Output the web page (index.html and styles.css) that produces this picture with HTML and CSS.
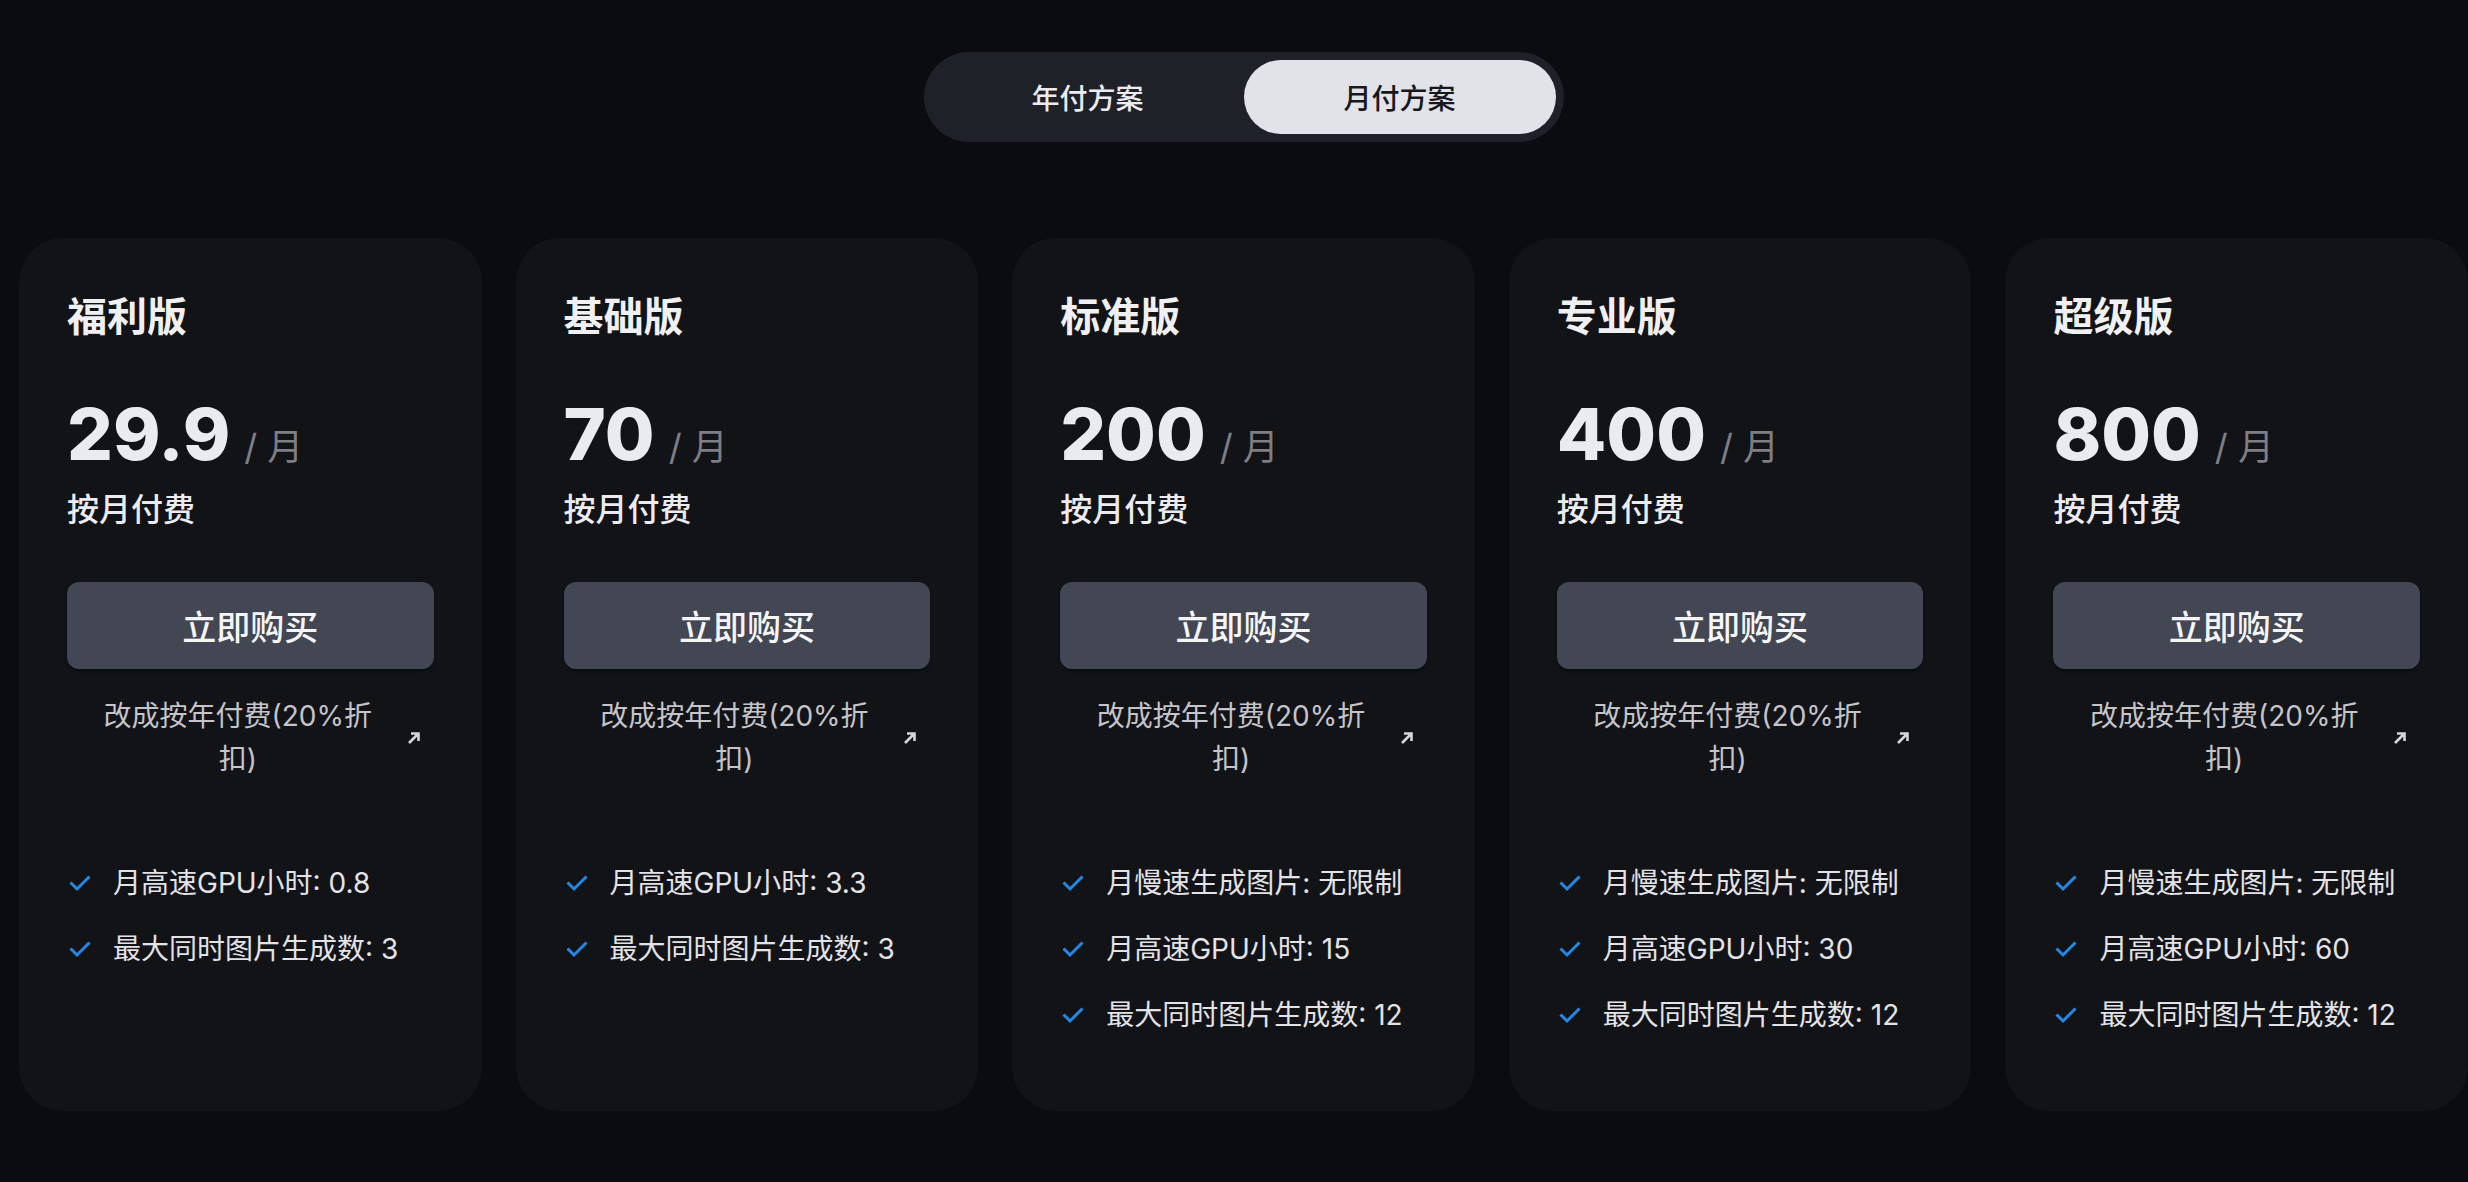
FILE: index.html
```html
<!DOCTYPE html>
<html lang="zh-CN">
<head>
    <meta charset="UTF-8">
    <meta name="viewport" content="width=device-width, initial-scale=1.0">
    <title>订阅方案</title>
    <link rel="stylesheet" href="styles.css">
</head>
<body>
    <div class="page">
        <div class="toggle">
            <button class="toggle-option">年付方案</button>
            <button class="toggle-option active">月付方案</button>
        </div>

        <div class="plans">
            <div class="plan">
                <h2 class="plan-name">福利版</h2>
                <div class="plan-price"><span class="amount">29.9</span><span class="unit">/ 月</span></div>
                <p class="plan-billing">按月付费</p>
                <button class="buy-btn">立即购买</button>
                <a class="switch-link"><span class="switch-text">改成按年付费(20%折扣)</span><svg class="switch-arrow" viewBox="0 0 16 16"><path d="M3 13L12.5 3.5M5 3.5H12.5V11"/></svg></a>
                <ul class="features">
                    <li><svg class="check" viewBox="0 0 24 24"><path d="M3.5 11.5L10 18L22.5 5.5"/></svg>月高速GPU小时: 0.8</li>
                    <li><svg class="check" viewBox="0 0 24 24"><path d="M3.5 11.5L10 18L22.5 5.5"/></svg>最大同时图片生成数: 3</li>
                </ul>
            </div>

            <div class="plan">
                <h2 class="plan-name">基础版</h2>
                <div class="plan-price"><span class="amount">70</span><span class="unit">/ 月</span></div>
                <p class="plan-billing">按月付费</p>
                <button class="buy-btn">立即购买</button>
                <a class="switch-link"><span class="switch-text">改成按年付费(20%折扣)</span><svg class="switch-arrow" viewBox="0 0 16 16"><path d="M3 13L12.5 3.5M5 3.5H12.5V11"/></svg></a>
                <ul class="features">
                    <li><svg class="check" viewBox="0 0 24 24"><path d="M3.5 11.5L10 18L22.5 5.5"/></svg>月高速GPU小时: 3.3</li>
                    <li><svg class="check" viewBox="0 0 24 24"><path d="M3.5 11.5L10 18L22.5 5.5"/></svg>最大同时图片生成数: 3</li>
                </ul>
            </div>

            <div class="plan">
                <h2 class="plan-name">标准版</h2>
                <div class="plan-price"><span class="amount">200</span><span class="unit">/ 月</span></div>
                <p class="plan-billing">按月付费</p>
                <button class="buy-btn">立即购买</button>
                <a class="switch-link"><span class="switch-text">改成按年付费(20%折扣)</span><svg class="switch-arrow" viewBox="0 0 16 16"><path d="M3 13L12.5 3.5M5 3.5H12.5V11"/></svg></a>
                <ul class="features">
                    <li><svg class="check" viewBox="0 0 24 24"><path d="M3.5 11.5L10 18L22.5 5.5"/></svg>月慢速生成图片: 无限制</li>
                    <li><svg class="check" viewBox="0 0 24 24"><path d="M3.5 11.5L10 18L22.5 5.5"/></svg>月高速GPU小时: 15</li>
                    <li><svg class="check" viewBox="0 0 24 24"><path d="M3.5 11.5L10 18L22.5 5.5"/></svg>最大同时图片生成数: 12</li>
                </ul>
            </div>

            <div class="plan">
                <h2 class="plan-name">专业版</h2>
                <div class="plan-price"><span class="amount">400</span><span class="unit">/ 月</span></div>
                <p class="plan-billing">按月付费</p>
                <button class="buy-btn">立即购买</button>
                <a class="switch-link"><span class="switch-text">改成按年付费(20%折扣)</span><svg class="switch-arrow" viewBox="0 0 16 16"><path d="M3 13L12.5 3.5M5 3.5H12.5V11"/></svg></a>
                <ul class="features">
                    <li><svg class="check" viewBox="0 0 24 24"><path d="M3.5 11.5L10 18L22.5 5.5"/></svg>月慢速生成图片: 无限制</li>
                    <li><svg class="check" viewBox="0 0 24 24"><path d="M3.5 11.5L10 18L22.5 5.5"/></svg>月高速GPU小时: 30</li>
                    <li><svg class="check" viewBox="0 0 24 24"><path d="M3.5 11.5L10 18L22.5 5.5"/></svg>最大同时图片生成数: 12</li>
                </ul>
            </div>

            <div class="plan">
                <h2 class="plan-name">超级版</h2>
                <div class="plan-price"><span class="amount">800</span><span class="unit">/ 月</span></div>
                <p class="plan-billing">按月付费</p>
                <button class="buy-btn">立即购买</button>
                <a class="switch-link"><span class="switch-text">改成按年付费(20%折扣)</span><svg class="switch-arrow" viewBox="0 0 16 16"><path d="M3 13L12.5 3.5M5 3.5H12.5V11"/></svg></a>
                <ul class="features">
                    <li><svg class="check" viewBox="0 0 24 24"><path d="M3.5 11.5L10 18L22.5 5.5"/></svg>月慢速生成图片: 无限制</li>
                    <li><svg class="check" viewBox="0 0 24 24"><path d="M3.5 11.5L10 18L22.5 5.5"/></svg>月高速GPU小时: 60</li>
                    <li><svg class="check" viewBox="0 0 24 24"><path d="M3.5 11.5L10 18L22.5 5.5"/></svg>最大同时图片生成数: 12</li>
                </ul>
            </div>
        </div>
    </div>
</body>
</html>
```

FILE: styles.css
```css
body {
    margin: 0;
    background-color: #0b0c0f;
    color: #ececf0;
    font-family: Inter, "Noto Sans CJK SC", sans-serif;
}

.page {
    height: 1182px;
    padding: 52px 0 0 19px;
    box-sizing: border-box;
    overflow: hidden;
}

/* toggle anual / mensual */
.toggle {
    display: flex;
    width: fit-content;
    margin: 0 auto;
    padding: 8px;
    background-color: #1f2128;
    border-radius: 999px;
}

.toggle-option {
    width: 312px;
    height: 74px;
    border: none;
    border-radius: 999px;
    background: none;
    color: #ececf0;
    font-family: inherit;
    font-size: 28px;
    font-weight: 500;
    cursor: pointer;
}

.toggle-option.active {
    background-color: #e2e3e8;
    color: #17181c;
}

.plans {
    display: grid;
    grid-template-columns: repeat(5, 1fr);
    gap: 34px;
    margin-top: 96px;
}

.plan {
    display: flex;
    flex-direction: column;
    background-color: #121317;
    border-radius: 44px;
    padding: 48px 48px 75px;
}

.plan-name {
    margin: 0;
    font-size: 40px;
    line-height: 62px;
    font-weight: 700;
    color: #f0f0f3;
}

.plan-price {
    display: flex;
    align-items: baseline;
    height: 72px;
    margin-top: 50px;
}

.amount {
    font-size: 72px;
    line-height: 72px;
    font-weight: 800;
    color: #eaebef;
}

.unit {
    margin-left: 14px;
    font-size: 36px;
    line-height: 36px;
    color: #7e7e84;
}

.plan-billing {
    margin: 16px 0 0;
    font-size: 32px;
    line-height: 48px;
    font-weight: 500;
    color: #ececf0;
}

.buy-btn {
    margin-top: 48px;
    height: 87px;
    border: none;
    border-radius: 12px;
    background-color: #434753;
    box-shadow: 0 2px 3px rgba(0, 0, 0, 0.4);
    color: #f5f5f7;
    font-family: inherit;
    font-size: 34px;
    font-weight: 500;
    cursor: pointer;
}

.switch-link {
    display: flex;
    align-items: center;
    gap: 24px;
    margin-top: 26px;
    padding: 0 12px 0 27px;
    font-size: 28px;
    line-height: 43px;
    color: #c4c4c9;
    cursor: pointer;
}

.switch-text {
    flex: 1;
    text-align: center;
}

.switch-arrow {
    width: 16px;
    height: 16px;
    flex-shrink: 0;
    fill: none;
    stroke: #d6d6da;
    stroke-width: 2.6;
}

.features {
    list-style: none;
    margin: 81px 0 0;
    padding: 0;
    display: flex;
    flex-direction: column;
    gap: 24px;
}

.features li {
    display: flex;
    align-items: center;
    gap: 22px;
    font-size: 28px;
    line-height: 42px;
    color: #e3e3e7;
}

.check {
    width: 24px;
    height: 24px;
    flex-shrink: 0;
    fill: none;
    stroke: #2188e6;
    stroke-width: 3;
}
```
